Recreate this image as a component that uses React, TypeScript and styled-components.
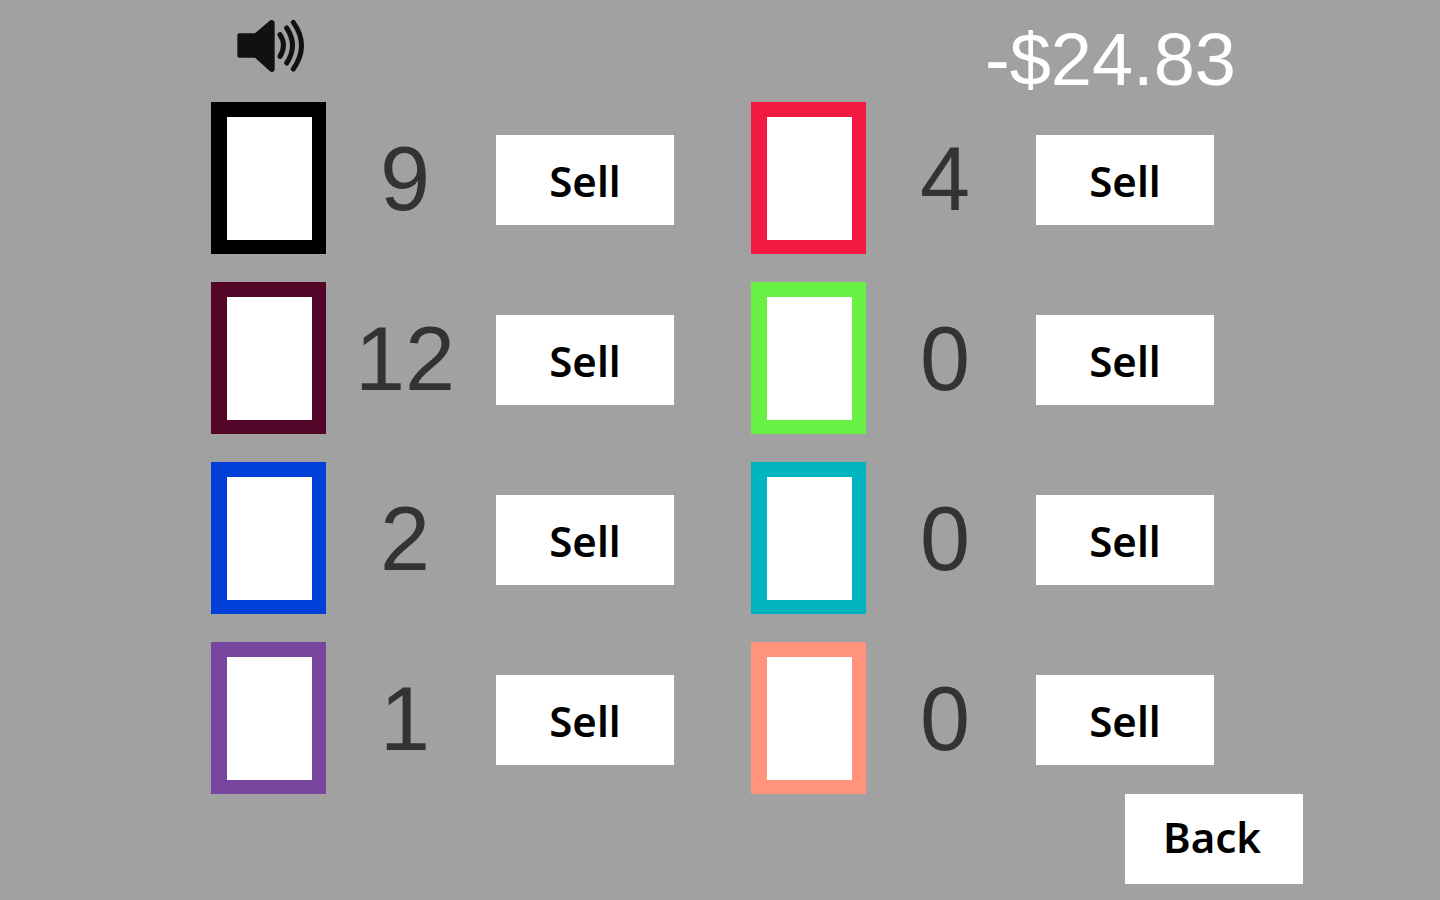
import React from "react";
import styled, { createGlobalStyle } from "styled-components";

const GlobalStyle = createGlobalStyle`
  *, *::before, *::after { box-sizing: border-box; }
  body {
    margin: 0;
    background: #a1a1a1;
    font-family: "Liberation Sans", Arial, sans-serif;
  }
`;

const Page = styled.main`
  min-height: 100vh;
  background: #a1a1a1;
`;

const Header = styled.header`
  display: flex;
  justify-content: space-between;
  align-items: flex-start;
  max-width: 1080px;
  height: 102px;
  margin: 0 auto;
  padding: 19px 24px 0 56px;
`;

const SoundButton = styled.button`
  display: block;
  padding: 0;
  border: 0;
  background: none;
  cursor: pointer;

  svg { display: block; }
`;

const Balance = styled.output`
  color: #fff;
  font-size: 74px;
  line-height: 82px;
`;

const Inventory = styled.ul`
  display: grid;
  grid-template-columns: repeat(2, minmax(0, 1fr));
  row-gap: 28px;
  max-width: 1080px;
  margin: 0 auto;
  padding: 0;
  list-style: none;
`;

const Item = styled.li`
  display: grid;
  grid-template-columns: minmax(0, 2fr) minmax(0, 1fr) minmax(0, 3fr);
  align-items: center;
  height: 152px;
`;

const Card = styled.div<{ $color: string }>`
  width: 115px;
  height: 152px;
  margin-left: 31px;
  border: solid ${(p) => p.$color};
  border-width: 15px 14px 14px 16px;
  background: #fff;
`;

const Count = styled.span`
  justify-self: center;
  padding-top: 2px;
  color: #333;
  font-size: 90px;
  line-height: 100px;
`;

const Action = styled.div`
  display: flex;
  justify-content: center;
  padding-top: 4px;
`;

const Button = styled.button`
  width: 178px;
  height: 90px;
  padding: 2px 0 0;
  border: 0;
  background: #fff;
  color: #000;
  font-family: "Noto Sans", "Open Sans", sans-serif;
  font-size: 42px;
  font-weight: 600;
  line-height: 56px;
  cursor: pointer;
`;

const BackButton = styled(Button)`
  padding: 0 4px 4px 0;
`;

const Footer = styled.footer`
  display: flex;
  justify-content: flex-end;
  max-width: 1166px;
  margin: 0 auto;
`;

const items = [
  { name: "Black", color: "#000000", count: 9 },
  { name: "Red", color: "#f21a41", count: 4 },
  { name: "Maroon", color: "#540629", count: 12 },
  { name: "Green", color: "#69f045", count: 0 },
  { name: "Blue", color: "#0040d8", count: 2 },
  { name: "Teal", color: "#00b4c0", count: 0 },
  { name: "Purple", color: "#78459e", count: 1 },
  { name: "Salmon", color: "#ff937b", count: 0 },
];

function SpeakerIcon() {
  return (
    <svg width="69" height="54" viewBox="0 0 207 162" aria-hidden="true">
      <path
        d="M10 43H57L101 5Q108 0 114 6Q116 8 116 12V150Q116 155 114 156Q108 162 101 156L57 116H10Q4 116 4 110V49Q4 43 10 43Z"
        fill="#111"
      />
      <g fill="none" stroke="#111" strokeWidth="15" strokeLinecap="round">
        <path d="M132 47Q153 79 132 112" />
        <path d="M152 27Q187 79 152 132" />
        <path d="M172 10Q221 79 172 150" />
      </g>
    </svg>
  );
}

export default function App() {
  return (
    <>
      <GlobalStyle />
      <Page>
        <Header>
          <SoundButton type="button" aria-label="Sound">
            <SpeakerIcon />
          </SoundButton>
          <Balance>-$24.83</Balance>
        </Header>
        <Inventory>
          {items.map((item) => (
            <Item key={item.name}>
              <Card $color={item.color} />
              <Count>{item.count}</Count>
              <Action>
                <Button type="button">Sell</Button>
              </Action>
            </Item>
          ))}
        </Inventory>
        <Footer>
          <BackButton type="button">Back</BackButton>
        </Footer>
      </Page>
    </>
  );
}
